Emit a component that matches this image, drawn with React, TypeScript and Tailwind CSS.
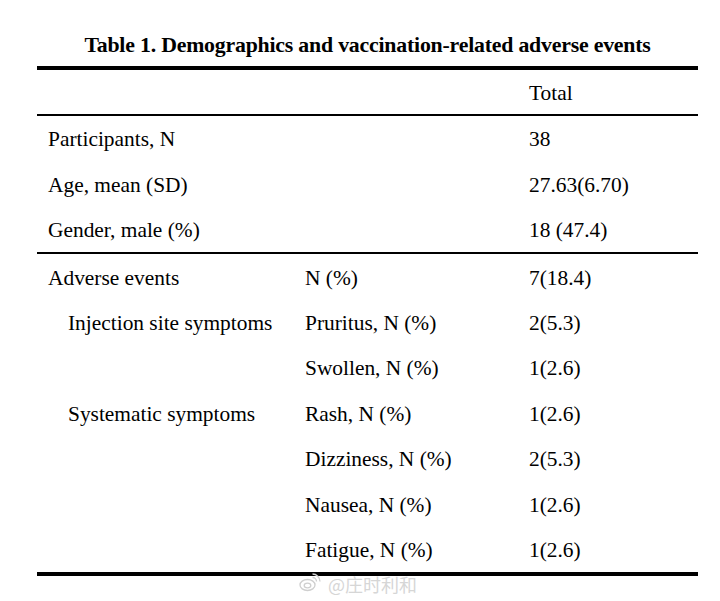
import React from 'react';

type Row = { a: string; b?: string; c: string; indent?: boolean };

const demo: Row[] = [
  { a: 'Participants, N', c: '38' },
  { a: 'Age, mean (SD)', c: '27.63(6.70)' },
  { a: 'Gender, male (%)', c: '18 (47.4)' },
];

const adverse: Row[] = [
  { a: 'Adverse events', b: 'N (%)', c: '7(18.4)' },
  { a: 'Injection site symptoms', b: 'Pruritus, N (%)', c: '2(5.3)', indent: true },
  { a: '', b: 'Swollen, N (%)', c: '1(2.6)' },
  { a: 'Systematic symptoms', b: 'Rash, N (%)', c: '1(2.6)', indent: true },
  { a: '', b: 'Dizziness, N (%)', c: '2(5.3)' },
  { a: '', b: 'Nausea, N (%)', c: '1(2.6)' },
  { a: '', b: 'Fatigue, N (%)', c: '1(2.6)' },
];

const TableRow = ({ row }: { row: Row }) => (
  <div className="grid grid-cols-[257px_224px_1fr] items-center h-[45.4px] pt-[3px] pl-[11px]">
    <div className={row.indent ? 'pl-[20px]' : ''}>{row.a}</div>
    <div>{row.b}</div>
    <div>{row.c}</div>
  </div>
);

export default function App() {
  return (
    <div
      className="w-[720px] h-[601px] bg-white text-black overflow-hidden"
      style={{ fontFamily: '"Liberation Serif", "Times New Roman", serif' }}
    >
      <div className="ml-[37px] w-[661px]">
        <h1 className="pt-[31px] h-[66px] text-center text-[21.8px] font-bold leading-[28px] tracking-[-0.2px]">
          Table 1. Demographics and vaccination-related adverse events
        </h1>
      </div>
      <div className="relative ml-[37px] w-[661px] text-[21.4px] leading-none">
        <div className="border-t-[4px] border-black" />
        <div className="grid grid-cols-[257px_224px_1fr] items-center h-[44px] pt-[3px] pl-[11px]">
          <div />
          <div />
          <div>Total</div>
        </div>
        <div className="border-t-2 border-black" />
        {demo.map((r, i) => (
          <TableRow key={i} row={r} />
        ))}
        <div className="border-t-2 border-black" />
        {adverse.map((r, i) => (
          <TableRow key={i} row={r} />
        ))}
        <div className="border-t-[4px] border-black" />
        <div className="absolute left-[262px] top-full mt-[-5px] flex items-center gap-[7px] text-[#d6d6d6] text-[18px] leading-none">
          <svg width="22" height="20" viewBox="0 0 22 20" fill="none" stroke="#cfcfcf" strokeWidth="1.3">
            <ellipse cx="8.5" cy="13" rx="7.5" ry="5.5" />
            <ellipse cx="8.5" cy="13.5" rx="3.3" ry="2.4" />
            <path d="M13.5 5.5a4 4 0 0 1 4 4" />
            <path d="M13.5 2a7.5 7.5 0 0 1 7.5 7.5" />
          </svg>
          <span className="mt-[4px]" style={{ fontFamily: '"Noto Sans CJK SC", sans-serif' }}>@庄时利和</span>
        </div>
      </div>
    </div>
  );
}
